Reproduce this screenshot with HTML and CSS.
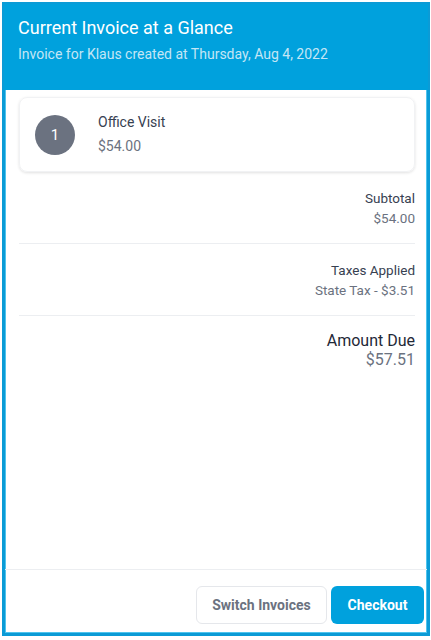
FILE: index.html
```html
<!DOCTYPE html>
<html>
  <head>
    <title>Current Invoice</title>
    <link rel="stylesheet" href="styles.css">
  </head>
  <body>
    <div class="paneel">
      <div class="kop">
        <div class="titel">Current Invoice at a Glance</div>
        <div class="ondertitel">Invoice for Klaus created at Thursday, Aug 4, 2022</div>
      </div>
      <div class="inhoud">
        <div class="kaart">
          <div class="nummer">1</div>
          <div class="item">
            <div class="item-naam">Office Visit</div>
            <div class="item-prijs">$54.00</div>
          </div>
        </div>
        <div class="regel">
          <div class="label">Subtotal</div>
          <div class="waarde">$54.00</div>
        </div>
        <div class="regel">
          <div class="label">Taxes Applied</div>
          <div class="waarde">State Tax - $3.51</div>
        </div>
        <div class="regel totaal">
          <div class="label">Amount Due</div>
          <div class="waarde">$57.51</div>
        </div>
      </div>
      <div class="voet">
        <button class="knop knop-wissel">Switch Invoices</button>
        <button class="knop knop-betaal">Checkout</button>
      </div>
    </div>
  </body>
</html>
```
FILE: styles.css
```css
body {
  margin: 2px 0 0 2px;
  font-family: Roboto, "Liberation Sans", sans-serif;
}
.paneel {
  width: 428px;
  height: 634px;
  box-sizing: border-box;
  border: 3px solid #0b9bd6;
  box-shadow: inset 0 0 0 1px #4fc4ee;
  display: flex;
  flex-direction: column;
  background-color: white;
}
.kop {
  background-color: #00a1dd;
  height: 86px;
  box-sizing: border-box;
  padding: 12px 14px 0 14px;
  margin: -1px -1px 0 -1px;
}
.titel {
  color: white;
  font-size: 18px;
  line-height: 24px;
}
.ondertitel {
  color: #c4e6f5;
  font-size: 14px;
  line-height: 20px;
  margin-top: 4px;
}
.inhoud {
  flex: 1;
  padding: 7px 12px 0 14px;
}
.kaart {
  height: 75px;
  box-sizing: border-box;
  border-radius: 8px;
  box-shadow: 0 1px 3px rgba(0, 0, 0, 0.12);
  border: 1px solid #f1f2f4;
  display: flex;
  align-items: center;
  padding-left: 15px;
}
.nummer {
  width: 40px;
  height: 40px;
  border-radius: 50%;
  background-color: #6b7280;
  color: white;
  font-size: 15px;
  display: flex;
  align-items: center;
  justify-content: center;
}
.item {
  margin-left: 23px;
}
.item-naam {
  color: #374151;
  font-size: 14px;
  line-height: 20px;
  margin-top: -2px;
}
.item-prijs {
  color: #6b7280;
  font-size: 14px;
  line-height: 20px;
  margin-top: 4px;
}
.regel {
  text-align: right;
  padding: 16px 0 15px 0;
  border-bottom: 1px solid #eceef1;
  font-size: 13.5px;
  line-height: 20px;
}
.label {
  color: #374151;
}
.waarde {
  color: #6b7280;
}
.totaal {
  border-bottom: none;
  padding-top: 15px;
  font-size: 16px;
  line-height: 19px;
}
.totaal .label {
  color: #1f2937;
}
.voet {
  border-top: 1px solid #eceef1;
  padding: 16px 3px 9px 0;
  display: flex;
  justify-content: flex-end;
  gap: 4px;
}
.knop {
  height: 38px;
  border-radius: 6px;
  font-family: Roboto, "Liberation Sans", sans-serif;
  font-size: 14px;
  font-weight: bold;
  cursor: pointer;
}
.knop-wissel {
  width: 131px;
  background-color: white;
  border: 1px solid #e5e7eb;
  color: #6b7280;
}
.knop-betaal {
  width: 93px;
  background-color: #00a1dd;
  border: none;
  color: white;
}
```
